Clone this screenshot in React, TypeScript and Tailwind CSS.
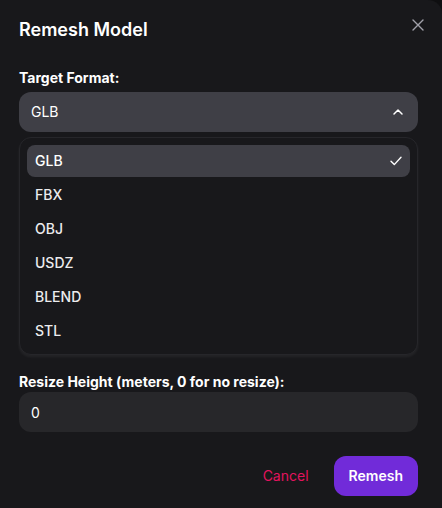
import { useState } from 'react';

const FORMATS = ['GLB', 'FBX', 'OBJ', 'USDZ', 'BLEND', 'STL'];

function CloseIcon() {
  return (
    <svg width="12" height="12" viewBox="0 0 12 12" fill="none" stroke="currentColor" strokeWidth="1.4" strokeLinecap="round">
      <path d="M1 1L11 11M11 1L1 11" />
    </svg>
  );
}

function ChevronUp() {
  return (
    <svg width="16" height="16" viewBox="0 0 16 16" fill="none" stroke="currentColor" strokeWidth="1.5" strokeLinecap="round" strokeLinejoin="round">
      <path d="M4 10L8 6L12 10" />
    </svg>
  );
}

function Check() {
  return (
    <svg width="12" height="10" viewBox="0 0 12 10" fill="none" stroke="currentColor" strokeWidth="1.4" strokeLinecap="round" strokeLinejoin="round">
      <path d="M1 5.2L4.3 8.6L11 1.2" />
    </svg>
  );
}

export default function App() {
  const [format, setFormat] = useState('GLB');
  const [height, setHeight] = useState('0');

  return (
    <div className="min-h-screen bg-[#0f0f11]" style={{ fontFamily: 'Inter, "Noto Sans", sans-serif' }}>
      <div className="relative flex min-h-[508px] flex-col rounded-tr-[14px] bg-[#18181b] pb-3 pl-[19px] pr-6 pt-4 text-[#ececee]">
        <button className="absolute right-[12px] top-[13px] flex h-6 w-6 items-center justify-center text-[#a1a1aa]">
          <CloseIcon />
        </button>

        <h2 className="text-lg font-semibold leading-7 text-white">Remesh Model</h2>

        <div className="mt-6 flex flex-col">
          <label className="text-sm font-bold leading-5 text-white">Target Format:</label>
          <button className="mt-1 flex h-10 items-center justify-between rounded-xl bg-[#3f3f46] px-3 text-sm text-white">
            <span>{format}</span>
            <ChevronUp />
          </button>

          <ul className="mt-[5px] flex flex-col gap-[2px] rounded-xl border border-[#26262a] bg-[#18181b] p-[7px] shadow-[0_2px_3px_rgba(255,255,255,0.06)]">
            {FORMATS.map((f) => (
              <li
                key={f}
                onClick={() => setFormat(f)}
                className={
                  f === format
                    ? 'flex h-8 cursor-pointer items-center justify-between rounded-lg bg-[#3f3f46] px-2 text-sm font-medium text-white'
                    : 'flex h-8 cursor-pointer items-center justify-between rounded-lg px-2 text-sm font-medium text-[#ececee]'
                }
              >
                <span>{f}</span>
                {f === format && <Check />}
              </li>
            ))}
          </ul>
        </div>

        <div className="mt-[17px] flex flex-col">
          <label className="text-sm font-bold leading-5 text-white">Resize Height (meters, 0 for no resize):</label>
          <input
            value={height}
            onChange={(e) => setHeight(e.target.value)}
            className="h-10 rounded-xl bg-[#27272a] px-3 text-sm text-white outline-none"
          />
        </div>

        <div className="mt-6 flex justify-end gap-2">
          <button className="h-10 min-w-20 rounded-xl px-4 text-sm text-[#e3135e]">Cancel</button>
          <button className="h-10 min-w-20 rounded-xl bg-[#712bd9] px-[15px] text-sm font-semibold text-white">Remesh</button>
        </div>
      </div>
    </div>
  );
}
